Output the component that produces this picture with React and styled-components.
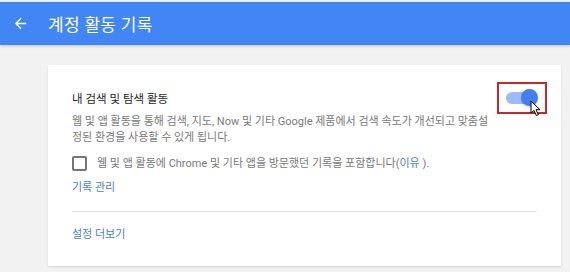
import React from "react";
import styled, { createGlobalStyle } from "styled-components";

const GlobalStyle = createGlobalStyle`
  body {
    margin: 0;
    background: #f2f2f2;
    font-family: Roboto, "Noto Sans CJK KR", sans-serif;
  }
`;

const Page = styled.div`
  width: 570px;
  height: 272px;
  padding-top: 2px;
  box-sizing: border-box;
  overflow: hidden;
`;

const Header = styled.header`
  height: 43px;
  display: flex;
  align-items: center;
  background: #4285f4;
  color: #fff;
  box-shadow: 0 1px 3px rgba(0, 0, 0, 0.2);
`;

const BackButton = styled.span`
  width: 48px;
  display: flex;
  justify-content: center;
  padding-right: 8px;
  box-sizing: border-box;
`;

const Title = styled.h1`
  margin: 0;
  font-size: 17px;
  font-weight: 400;
  letter-spacing: 0.3px;
`;

const Card = styled.section`
  margin: 20px 9px 0 48px;
  background: #fff;
  box-shadow: 0 1px 2px rgba(0, 0, 0, 0.12);
  padding: 17px 24px 23px;
`;

const TitleRow = styled.div`
  display: flex;
  align-items: center;
  justify-content: space-between;
  margin-right: -10px;
`;

const SettingTitle = styled.div`
  font-size: 11.5px;
  color: #262626;
`;

const Highlight = styled.div`
  position: relative;
  width: 50px;
  height: 32px;
  box-sizing: border-box;
  border: 2px solid #c62828;
  display: flex;
  align-items: center;
  justify-content: center;
`;

const Track = styled.div`
  position: relative;
  width: 30px;
  height: 12px;
  margin-right: 3px;
  border-radius: 6px;
  background: #9dbcf7;
`;

const Thumb = styled.div`
  position: absolute;
  right: -2px;
  top: -3px;
  width: 17px;
  height: 17px;
  border-radius: 50%;
  background: #3f7ff0;
  box-shadow: 0 1px 2px rgba(0, 0, 0, 0.25);
`;

const Cursor = styled.svg`
  position: absolute;
  left: 31px;
  top: 16px;
`;

const Description = styled.p`
  margin: 0;
  max-width: 425px;
  font-size: 11px;
  line-height: 16px;
  color: #7a7a7a;
`;

const CheckRow = styled.label`
  display: flex;
  align-items: center;
  gap: 10px;
  height: 20px;
  margin-top: 7px;
  font-size: 11px;
  color: #7a7a7a;
`;

const Box = styled.span`
  width: 15px;
  height: 15px;
  box-sizing: border-box;
  border: 2px solid #757575;
  border-radius: 2px;
`;

const Link = styled.a`
  color: #4a7fc4;
  text-decoration: none;
  font-size: ${(p) => (p.$inline ? "inherit" : "11px")};
  display: ${(p) => (p.$inline ? "inline" : "block")};
  line-height: 16px;
  margin-top: ${(p) => (p.$inline ? "0" : p.$top || "0")};
`;

const Divider = styled.hr`
  border: 0;
  border-top: 1px solid #e0e0e0;
  margin: 15px 0 0;
`;

export default function App() {
  return (
    <Page>
      <GlobalStyle />
      <Header>
        <BackButton>
          <svg width="17" height="17" viewBox="0 0 24 24">
            <path d="M20 11H7.83l5.59-5.59L12 4l-8 8 8 8 1.41-1.41L7.83 13H20v-2z" fill="#fff" />
          </svg>
        </BackButton>
        <Title>계정 활동 기록</Title>
      </Header>
      <Card>
        <TitleRow>
          <SettingTitle>내 검색 및 탐색 활동</SettingTitle>
          <Highlight>
            <Track>
              <Thumb />
            </Track>
            <Cursor width="12" height="17" viewBox="0 0 12 17">
              <path
                d="M1 1 L1 13 L4 10.5 L6.3 15.5 L8.3 14.6 L6 9.7 L10 9.7 Z"
                fill="#fff"
                stroke="#000"
                strokeWidth="1"
                strokeLinejoin="round"
              />
            </Cursor>
          </Highlight>
        </TitleRow>
        <Description>
          웹 및 앱 활동을 통해 검색, 지도, Now 및 기타 Google 제품에서 검색 속도가 개선되고 맞춤설정된 환경을 사용할 수 있게 됩니다.
        </Description>
        <CheckRow>
          <Box />
          <span>
            웹 및 앱 활동에 Chrome 및 기타 앱을 방문했던 기록을 포함합니다(<Link $inline href="#">이유</Link> ).
          </span>
        </CheckRow>
        <Link href="#" $top="7px">기록 관리</Link>
        <Divider />
        <Link href="#" $top="15px">설정 더보기</Link>
      </Card>
    </Page>
  );
}
